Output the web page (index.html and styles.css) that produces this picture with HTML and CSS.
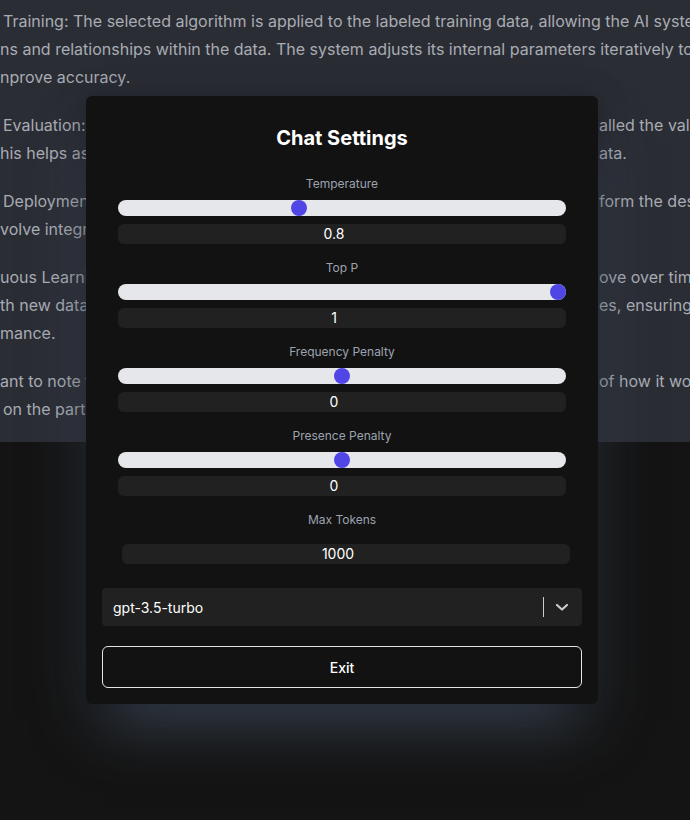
FILE: index.html
```html
<!DOCTYPE html>
<html lang="en">
<head>
<meta charset="utf-8">
<title>Chat Settings</title>
<link rel="stylesheet" href="styles.css">
</head>
<body>
<div class="page">
  <div class="thread">
    <div class="para">
      <div class="line first">Training: The selected algorithm is applied to the labeled training data, allowing the AI system to learn</div>
      <div class="line">ns and relationships within the data. The system adjusts its internal parameters iteratively to</div>
      <div class="line">nprove accuracy.</div>
    </div>
    <div class="para">
      <div class="line split"><span class="left first">Evaluation: The trained model is then tested using a separate dataset, often c</span><span class="right">alled the validation set</span></div>
      <div class="line split"><span class="left">his helps assess how well the model generalizes to new, unseen d</span><span class="right">ata.</span></div>
    </div>
    <div class="para">
      <div class="line split"><span class="left first">Deployment: Once the model performs well, it is deployed to per</span><span class="right">form the desired task</span></div>
      <div class="line split"><span class="left">volve integrating the model into existing software systems</span><span class="right"></span></div>
    </div>
    <div class="para">
      <div class="line split"><span class="left">uous Learning: Many AI systems are designed to learn and impr</span><span class="right">ove over time</span></div>
      <div class="line split"><span class="left">th new data, they can update their models and adapt to chang</span><span class="right">es, ensuring</span></div>
      <div class="line split"><span class="left">mance.</span><span class="right"></span></div>
    </div>
    <div class="para">
      <div class="line split"><span class="left">ant to note that AI systems vary widely in their design, and the details o</span><span class="right">of how it works</span></div>
      <div class="line split"><span class="left first">on the particular application and technique used.</span><span class="right"></span></div>
    </div>
  </div>
  <div class="floor"></div>

  <div class="modal">
    <h2 class="title">Chat Settings</h2>
    <div class="fields">
      <div class="field">
        <label class="label">Temperature</label>
        <input class="range" type="range" min="0" max="2" step="0.1" value="0.8">
        <div class="value">0.8</div>
      </div>
      <div class="field">
        <label class="label">Top P</label>
        <input class="range" type="range" min="0" max="1" step="0.05" value="1">
        <div class="value">1</div>
      </div>
      <div class="field">
        <label class="label">Frequency Penalty</label>
        <input class="range" type="range" min="-2" max="2" step="0.1" value="0">
        <div class="value">0</div>
      </div>
      <div class="field">
        <label class="label">Presence Penalty</label>
        <input class="range" type="range" min="-2" max="2" step="0.1" value="0">
        <div class="value">0</div>
      </div>
      <div class="field tokens">
        <label class="label">Max Tokens</label>
        <div class="value shifted">1000</div>
      </div>
    </div>
    <div class="select">
      <span class="select-text">gpt-3.5-turbo</span>
      <span class="select-sep"></span>
      <svg class="chevron" width="20" height="20" viewBox="0 0 20 20" aria-hidden="true">
        <path d="M5 8 L10 12.5 L15 8" fill="none" stroke="#cccccc" stroke-width="2.2" stroke-linecap="round" stroke-linejoin="round"/>
      </svg>
    </div>
    <button class="exit" type="button">Exit</button>
  </div>
</div>
</body>
</html>
```

FILE: styles.css
```css
* { box-sizing: border-box; }

html, body {
  margin: 0;
  padding: 0;
  background: #141414;
}

body {
  font-family: Inter, "Noto Sans", "Liberation Sans", sans-serif;
  color: #ffffff;
}

.page {
  position: relative;
  width: 690px;
  height: 820px;
  overflow: hidden;
}

.thread {
  height: 442px;
  background: #2b2d35;
  padding-top: 7px;
  display: flex;
  flex-direction: column;
  gap: 20px;
}

.para {
  display: flex;
  flex-direction: column;
}

.line {
  font-size: 16px;
  line-height: 28px;
  color: #a8acb3;
  white-space: nowrap;
  overflow: hidden;
}

.line.first, .left.first {
  padding-left: 3px;
}

.split {
  display: grid;
  grid-template-columns: 597px 1fr;
}

.left, .right {
  overflow: hidden;
  white-space: nowrap;
}

.right {
  padding-left: 2px;
}

.floor {
  flex: 1;
}

.modal {
  position: absolute;
  left: 86px;
  top: 96px;
  width: 512px;
  height: 608px;
  background: #121212;
  border-radius: 6px;
  padding: 28px 16px 16px;
  display: flex;
  flex-direction: column;
  box-shadow: 0 0 30px rgba(0, 0, 0, 0.3), 0 30px 60px -16px rgba(71, 85, 105, 0.85);
}

.title {
  margin: 0;
  font-size: 20px;
  line-height: 28px;
  font-weight: 700;
  text-align: center;
  color: #ffffff;
}

.fields {
  margin-top: 24px;
  padding: 0 16px;
  display: flex;
  flex-direction: column;
  gap: 16px;
}

.field {
  display: flex;
  flex-direction: column;
  gap: 8px;
}

.field.tokens {
  gap: 16px;
}

.label {
  font-size: 12px;
  line-height: 16px;
  color: #9ca3af;
  text-align: center;
}

.range {
  -webkit-appearance: none;
  appearance: none;
  display: block;
  width: 100%;
  height: 16px;
  margin: 0;
  border-radius: 9999px;
  background: #e5e7eb;
  outline: none;
}

.range::-webkit-slider-thumb {
  -webkit-appearance: none;
  appearance: none;
  width: 16px;
  height: 16px;
  border-radius: 50%;
  background: #4f46e5;
  border: none;
}

.value {
  height: 20px;
  border-radius: 6px;
  background: #212121;
  font-size: 14px;
  line-height: 20px;
  color: #ffffff;
  text-align: center;
  padding-right: 16px;
}

.value.shifted {
  margin-left: 4px;
  margin-right: -4px;
}

.select {
  margin-top: 24px;
  height: 38px;
  background: #212121;
  border-radius: 4px;
  display: flex;
  align-items: center;
  padding: 0 10px 0 11px;
}

.select-text {
  flex: 1;
  font-size: 14px;
  color: #ffffff;
}

.select-sep {
  width: 1px;
  height: 20px;
  background: #cccccc;
  margin-right: 8px;
}

.chevron {
  display: block;
}

.exit {
  margin-top: 20px;
  height: 42px;
  width: 100%;
  background: transparent;
  border: 1px solid #e5e5e5;
  border-radius: 6px;
  color: #ffffff;
  font-family: Inter, "Noto Sans", "Liberation Sans", sans-serif;
  font-size: 14px;
  font-weight: 500;
  cursor: pointer;
}
```
